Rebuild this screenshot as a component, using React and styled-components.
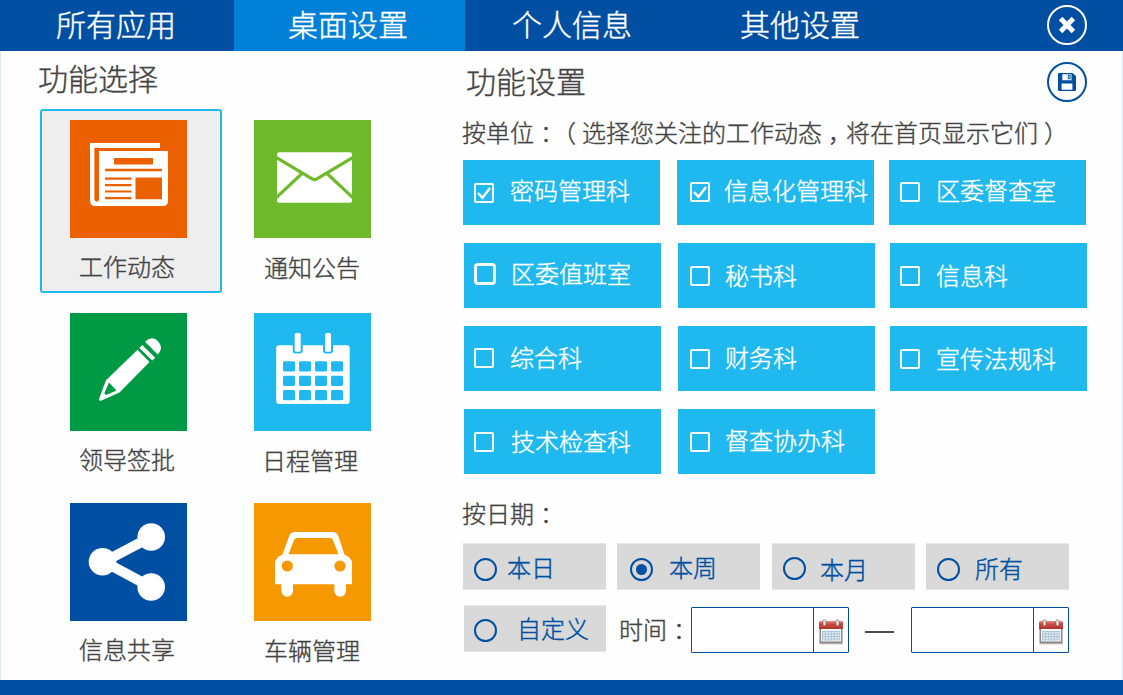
import React, { useState } from 'react';
import styled, { createGlobalStyle } from 'styled-components';

const BLUE = '#004fa2';
const CYAN = '#1fb9f0';

const GlobalStyle = createGlobalStyle`
  * { box-sizing: border-box; }
  body {
    margin: 0;
    font-family: "Noto Sans CJK SC", "Noto Sans CJK TC", sans-serif;
    font-weight: 300;
    -webkit-text-stroke: 0.4px currentColor;
    color: #444;
  }
`;

const Window = styled.div`
  width: 1123px;
  height: 695px;
  display: flex;
  flex-direction: column;
  overflow: hidden;
  background: #fefefe;
`;

const Header = styled.header`
  height: 51px;
  flex: none;
  display: flex;
  background: ${BLUE};
  padding-right: 36px;
`;

const Tab = styled.div`
  width: ${(p) => p.$width}px;
  padding-left: ${(p) => p.$indent}px;
  font-size: 30px;
  line-height: 47px;
  white-space: nowrap;
  color: #fff;
  background: ${(p) => (p.$active ? '#0080d7' : 'transparent')};
`;

const RoundButton = styled.div`
  width: 40px;
  height: 40px;
  flex: none;
  margin-left: auto;
  margin-top: ${(p) => p.$top}px;
  border: 2px solid ${(p) => p.$color};
  border-radius: 50%;
  display: flex;
  align-items: center;
  justify-content: center;
  svg { display: block; }
`;

const Main = styled.main`
  flex: 1;
  display: flex;
  border: solid #dcebf3;
  border-width: 0 1px;
`;

const Sidebar = styled.section`
  width: 461px;
  padding-left: 39px;
`;

const Content = styled.section`
  flex: 1;
  padding-right: 35px;
`;

const Heading = styled.h2`
  margin: 0;
  margin-left: ${(p) => p.$indent}px;
  padding-top: ${(p) => p.$top}px;
  font-size: 30px;
  line-height: 40px;
  font-weight: 300;
`;

const AppGrid = styled.div`
  display: grid;
  grid-template-columns: 182px 182px;
  grid-template-rows: 193px 190px 184px;
  column-gap: 2px;
  margin-top: 12px;
`;

const AppCell = styled.div`
  height: 184px;
  border: 2px solid ${(p) => (p.$selected ? CYAN : 'transparent')};
  border-radius: 3px;
  background: ${(p) => (p.$selected ? '#eeeeee' : 'transparent')};
  padding: 9px 0 0 28px;
`;

const AppIcon = styled.svg`
  display: block;
  width: 117px;
  height: 118px;
  background: ${(p) => p.$color};
`;

const AppLabel = styled.div`
  margin: ${(p) => p.$top}px 0 0 ${(p) => p.$left}px;
  font-size: 24px;
  line-height: 30px;
  white-space: nowrap;
`;

const ContentHeader = styled.div`
  display: flex;
  height: 61px;
`;

const Caption = styled.div`
  height: ${(p) => p.$height}px;
  padding-top: ${(p) => p.$top || 0}px;
  font-size: 24px;
  line-height: 40px;
  white-space: nowrap;
`;

const Mark = styled.span`
  display: inline-block;
  width: 24px;
  text-align: center;
  font-feature-settings: "halt" 1;
`;

const UnitRow = styled.div`
  display: grid;
  grid-template-columns: 214px 212px 197px;
  height: 65px;
  margin: 0 0 18px ${(p) => p.$left}px;
`;

const Unit = styled.div`
  width: 197px;
  height: 65px;
  display: flex;
  align-items: flex-start;
  background: ${CYAN};
  color: #fff;
`;

const CheckBox = styled.span`
  flex: none;
  width: ${(p) => (p.$bold ? 22 : 20)}px;
  height: ${(p) => (p.$bold ? 22 : 20)}px;
  margin: ${(p) => p.$y}px 0 0 ${(p) => p.$x}px;
  border: ${(p) => (p.$bold ? 3 : 2)}px solid #f4fcff;
  border-radius: ${(p) => (p.$bold ? 4 : 2)}px;
  svg { display: block; }
`;

const ItemText = styled.span`
  margin: ${(p) => p.$y}px 0 0 ${(p) => p.$x}px;
  font-size: 24px;
  line-height: 30px;
  white-space: nowrap;
`;

const DateRow = styled.div`
  display: flex;
  align-items: flex-start;
  height: 46px;
  margin: ${(p) => p.$top}px 0 0 ${(p) => p.$left}px;
`;

const RadioOption = styled.div`
  width: ${(p) => p.$width || 143}px;
  height: 47px;
  flex: none;
  margin-right: ${(p) => p.$gap}px;
  display: flex;
  align-items: flex-start;
  background: #d9d9d9;
  border: solid #e6e6e6;
  border-width: 1px 0;
  color: ${BLUE};
`;

const Radio = styled.span`
  flex: none;
  width: 23px;
  height: 23px;
  margin: ${(p) => p.$y}px 0 0 ${(p) => p.$x}px;
  border: 2px solid ${BLUE};
  border-radius: 50%;
  display: flex;
  align-items: center;
  justify-content: center;
`;

const RadioDot = styled.i`
  width: 11px;
  height: 11px;
  border-radius: 50%;
  background: ${BLUE};
`;

const TimeLabel = styled.div`
  width: 72px;
  margin: 9px 0 0 13px;
  font-size: 24px;
  line-height: 30px;
  white-space: nowrap;
`;

const DateField = styled.div`
  width: 158px;
  height: 46px;
  margin-top: 2px;
  display: flex;
  border: 1px solid ${BLUE};
  border-radius: 1px;
  background: #fff;
`;

const DateValue = styled.div`
  flex: 1;
`;

const DatePick = styled.div`
  width: 35px;
  border-left: 1px solid ${BLUE};
  padding: 11px 0 0 4px;
  svg { display: block; }
`;

const Dash = styled.div`
  width: 29px;
  height: 2px;
  margin: 26px 17px 0 16px;
  background: #4a4a4a;
`;

const Footer = styled.footer`
  height: 15px;
  flex: none;
  background: ${BLUE};
`;

const News = (
  <g>
    <path d="M20 23H90V28H24.5V80H29V31H98V81Q98 86 93 86H25Q20 86 20 80Z" fill="#fff" />
    <path d="M24.7 27.7H29V79.5A2.15 2.15 0 0 1 24.7 79.5Z" fill="#eb6100" />
    <path d="M44 38H83V44.5H44ZM35 48.8H92V51.2H35ZM35 57.6H61.5V59.8H35ZM35 64H61.5V66.2H35ZM35 70.4H61.5V72.6H35ZM35 77H61.5V79.2H35ZM65.5 57.5H92V79.2H65.5Z" fill="#eb6100" />
  </g>
);

const Mail = (
  <g>
    <rect x="23" y="32.3" width="75" height="50.4" rx="2" fill="#fff" />
    <path d="M22 37.3L58.5 59Q60.5 60.5 62.5 59L99 37.3M48.5 53L22 77.8M72.5 53L99 77.8" fill="none" stroke="#6fba2c" strokeWidth="3.2" />
  </g>
);

const Pencil = (
  <g fill="#fff">
    <path d="M67.5 36.8L79.5 49L49.5 79.5L31.5 87.5Q28.5 88.5 29.2 85.5L36 67.3ZM39 69.5L34.3 80.2L36 82L46.5 77.5Z" fillRule="evenodd" />
    <path d="M69.3 34.9L72.3 32L85.2 44.8L82.3 47.6Z" />
    <path d="M75 28.8Q80 23.5 85.5 26.2Q90 29.3 91 34Q91.3 37.5 87.7 41.4Z" />
  </g>
);

const Calendar = (
  <g>
    <rect x="22.2" y="32.3" width="73.5" height="58.7" rx="3" fill="#fff" />
    {[40.7, 71].map((x) => (
      <g key={x}>
        <rect x={x - 2} y="28" width="10" height="12.6" rx="3" fill={CYAN} />
        <rect x={x} y="20" width="6" height="18.8" rx="1.5" fill="#fff" />
      </g>
    ))}
    {[48.3, 62.7, 77].map((y) =>
      [29, 45, 61, 77].map((x) => (
        <rect key={`${x}-${y}`} x={x} y={y} width="12" height="10.3" rx="1.5" fill={CYAN} />
      ))
    )}
  </g>
);

const Share = (
  <g>
    <path d="M81 34L34 58.7L81 84" fill="none" stroke="#fff" strokeWidth="10" />
    <circle cx="32.5" cy="58.7" r="13.8" fill="#fff" />
    <circle cx="81.2" cy="34" r="13.8" fill="#fff" />
    <circle cx="81.2" cy="84" r="13.8" fill="#fff" />
  </g>
);

const Car = (
  <g fill="#fff">
    <path fillRule="evenodd" d="M28.5 51.5L35 33.5Q36.5 29 41 29H78.5Q83 29 84.5 33.5L90.5 51.5Q98 55 98 60V81.3H92V88A5.8 5.8 0 0 1 80.4 88V81.3H39V88A5.8 5.8 0 0 1 27.4 88V81.3H21V60Q21 55 28.5 51.5ZM34.5 51.2H84.5L78.7 36.5Q78 35 76.5 35H42.5Q41 35 40.3 36.5Z" />
    <circle cx="33.3" cy="63" r="5.6" fill="#f69900" />
    <circle cx="86" cy="63" r="5.6" fill="#f69900" />
  </g>
);

const apps = [
  { name: '工作动态', color: '#eb6100', icon: News, left: 9, top: 13, selected: true },
  { name: '通知公告', color: '#6fba2c', icon: Mail, left: 10, top: 14 },
  { name: '领导签批', color: '#009944', icon: Pencil, left: 9, top: 13 },
  { name: '日程管理', color: CYAN, icon: Calendar, left: 8, top: 14 },
  { name: '信息共享', color: BLUE, icon: Share, left: 9, top: 13 },
  { name: '车辆管理', color: '#f69900', icon: Car, left: 10, top: 14 },
];

const unitRows = [
  [
    { name: '密码管理科', box: [11, 23], text: [16, 15], checked: true },
    { name: '信息化管理科', box: [13, 22], text: [14, 15], checked: true },
    { name: '区委督查室', box: [11, 22], text: [16, 15] },
  ],
  [
    { name: '区委值班室', box: [10, 20], text: [15, 15], bold: true },
    { name: '秘书科', box: [12, 23], text: [15, 17] },
    { name: '信息科', box: [10, 23], text: [16, 17] },
  ],
  [
    { name: '综合科', box: [10, 22], text: [16, 16] },
    { name: '财务科', box: [12, 23], text: [15, 16] },
    { name: '宣传法规科', box: [10, 23], text: [16, 17] },
  ],
  [
    { name: '技术检查科', box: [10, 23], text: [17, 17] },
    { name: '督查协办科', box: [12, 23], text: [15, 16] },
  ],
];

const ranges = [
  { name: '本日', radio: [11, 14], text: [10, 8], gap: 11 },
  { name: '本周', radio: [13, 14], text: [16, 8], gap: 12 },
  { name: '本月', radio: [11, 13], text: [14, 10], gap: 11 },
  { name: '所有', radio: [11, 14], text: [15, 9], gap: 0 },
];

const customRange = { name: '自定义', radio: [10, 13], text: [20, 7], gap: 0, width: 142 };

function RadioItem({ item, checked, onSelect }) {
  return (
    <RadioOption $gap={item.gap} $width={item.width} onClick={() => onSelect(item.name)}>
      <Radio $x={item.radio[0]} $y={item.radio[1]}>{checked && <RadioDot />}</Radio>
      <ItemText $x={item.text[0]} $y={item.text[1]}>{item.name}</ItemText>
    </RadioOption>
  );
}

function DateInput() {
  return (
    <DateField>
      <DateValue />
      <DatePick>
        <svg width="26" height="27" viewBox="0 0 26 27">
          <rect x="2" y="24" width="23" height="1.6" fill="#d8d4d2" />
          <rect x="1.5" y="7" width="23" height="17.5" fill="#8d8583" />
          <rect x="3" y="9" width="20" height="13.5" fill="#f6f7f8" />
          <rect x="1" y="2.5" width="24" height="7.2" rx="1" fill="#c5443c" />
          <rect x="1.5" y="2.5" width="23" height="2" rx="1" fill="#dc6b62" />
          <rect x="1" y="8.4" width="24" height="1.3" fill="#9c2d28" />
          <rect x="4" y="12" width="18" height="10.5" fill="#a9c3d6" />
          {[12.9, 15.5, 18.1, 20.5].map((y) =>
            [4.8, 7.8, 10.8, 13.8, 16.8, 19.4].map((x) => (
              <rect key={`${x}-${y}`} x={x} y={y} width="2" height="1.5" fill="#e9f0f5" />
            ))
          )}
          <rect x="5" y="0.7" width="3" height="6" rx="1.5" fill="#efeae8" stroke="#81605c" strokeWidth="0.7" />
          <rect x="18" y="0.7" width="3" height="6" rx="1.5" fill="#efeae8" stroke="#81605c" strokeWidth="0.7" />
        </svg>
      </DatePick>
    </DateField>
  );
}

export default function App() {
  const [range, setRange] = useState('本周');
  return (
    <Window>
      <GlobalStyle />
      <Header>
        <Tab $width={234} $indent={56}>所有应用</Tab>
        <Tab $width={231} $indent={54} $active>桌面设置</Tab>
        <Tab $width={230} $indent={47}>个人信息</Tab>
        <Tab $width={230} $indent={45}>其他设置</Tab>
        <RoundButton $top={5} $color="#fff">
          <svg width="18" height="18" viewBox="0 0 18 18">
            <path d="M2.6 2.6L15.4 15.4M15.4 2.6L2.6 15.4" stroke="#fff" strokeWidth="5" />
          </svg>
        </RoundButton>
      </Header>
      <Main>
        <Sidebar>
          <Heading $top={6} $indent={-2}>功能选择</Heading>
          <AppGrid>
            {apps.map((app) => (
              <AppCell key={app.name} $selected={app.selected}>
                <AppIcon $color={app.color} viewBox="0 0 117 118">{app.icon}</AppIcon>
                <AppLabel $left={app.left} $top={app.top}>{app.name}</AppLabel>
              </AppCell>
            ))}
          </AppGrid>
        </Sidebar>
        <Content>
          <ContentHeader>
            <Heading $top={9} $indent={4}>功能设置</Heading>
            <RoundButton $top={11} $color={BLUE}>
              <svg width="18" height="18" viewBox="0 0 18 18">
                <path fillRule="evenodd" fill={BLUE} d="M1.2 0H14.5L18 3V16.8Q18 18 16.8 18H1.2Q0 18 0 16.8V1.2Q0 0 1.2 0ZM4.3 1.3V7.2H13.5V1.3ZM3.6 10.5V16.8H14.4V10.5Z" />
                <rect x="9.8" y="1.8" width="2.8" height="4.4" fill={BLUE} />
                <rect x="10.7" y="2.6" width="0.9" height="2.8" fill="#fff" />
              </svg>
            </RoundButton>
          </ContentHeader>
          <Caption $height={48}>
            按单位<Mark>：</Mark><Mark>（</Mark>选择您关注的工作动态<Mark>，</Mark>将在首页显示它们<Mark>）</Mark>
          </Caption>
          {unitRows.map((row, i) => (
            <UnitRow key={i} $left={i === 0 ? 1 : 2}>
              {row.map((unit) => (
                <Unit key={unit.name}>
                  <CheckBox $x={unit.box[0]} $y={unit.box[1]} $bold={unit.bold}>
                    {unit.checked && (
                      <svg width="16" height="16" viewBox="0 0 16 16">
                        <path d="M2 8L6.5 12.8L14 3" fill="none" stroke="#fff" strokeWidth="2.5" />
                      </svg>
                    )}
                  </CheckBox>
                  <ItemText $x={unit.text[0]} $y={unit.text[1]}>{unit.name}</ItemText>
                </Unit>
              ))}
            </UnitRow>
          ))}
          <Caption $height={40} $top={1}>按日期<Mark>：</Mark></Caption>
          <DateRow $top={11} $left={1}>
            {ranges.map((item) => (
              <RadioItem key={item.name} item={item} checked={range === item.name} onSelect={setRange} />
            ))}
          </DateRow>
          <DateRow $top={16} $left={2}>
            <RadioItem item={customRange} checked={range === customRange.name} onSelect={setRange} />
            <TimeLabel>时间<Mark>：</Mark></TimeLabel>
            <DateInput />
            <Dash />
            <DateInput />
          </DateRow>
        </Content>
      </Main>
      <Footer />
    </Window>
  );
}
